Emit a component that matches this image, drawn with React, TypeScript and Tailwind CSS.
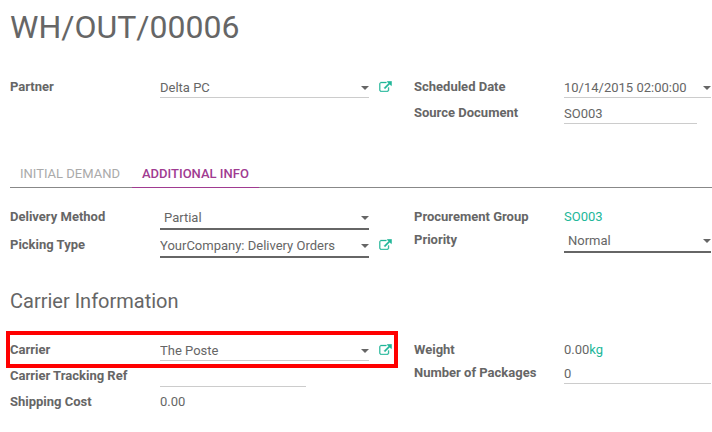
import { useState } from "react";
import type { ReactNode } from "react";
import clsx from "clsx";

interface FieldRowProps {
  id?: string;
  label: string;
  children: ReactNode;
  className?: string;
}

function FieldRow({ id, label, children, className }: FieldRowProps) {
  return (
    <div className={clsx("flex items-start", className)}>
      {id ? (
        <label htmlFor={id} className="w-[150px] shrink-0 font-bold leading-[18px]">
          {label}
        </label>
      ) : (
        <span className="w-[150px] shrink-0 font-bold leading-[18px]">{label}</span>
      )}
      {children}
    </div>
  );
}

function Caret() {
  return (
    <svg viewBox="0 0 8 4" className="pointer-events-none absolute right-0 top-2 h-1 w-2" aria-hidden="true">
      <path d="M0 0h8L4 4z" fill="currentColor" />
    </svg>
  );
}

interface TextFieldProps {
  id: string;
  defaultValue?: string;
  caret?: boolean;
  strong?: boolean;
  className?: string;
}

function TextField({ id, defaultValue = "", caret, strong, className = "min-w-0 flex-1" }: TextFieldProps) {
  return (
    <div className={clsx("relative flex", strong ? "border-b-2 border-[#666]" : "border-b border-[#ccc]", className)}>
      <input
        id={id}
        type="text"
        defaultValue={defaultValue}
        className={clsx("w-full min-w-0 bg-transparent leading-5 outline-none", strong ? "h-5" : "h-[19px]", caret && "pr-3")}
      />
      {caret && <Caret />}
    </div>
  );
}

function SelectField({ id, options }: { id: string; options: string[] }) {
  return (
    <div className="relative flex min-w-0 flex-1 border-b-2 border-[#666]">
      <select id={id} className="h-5 w-full appearance-none bg-transparent pl-1 pr-3 leading-5 outline-none">
        {options.map((option) => (
          <option key={option}>{option}</option>
        ))}
      </select>
      <Caret />
    </div>
  );
}

function OpenButton({ label }: { label: string }) {
  return (
    <button type="button" aria-label={label} className="ml-[10px] mt-[3px] w-[14px] shrink-0 text-[#21b799]">
      <svg
        viewBox="-30 -30 1852 1596"
        className="h-[11px] w-[13px]"
        fill="currentColor"
        stroke="currentColor"
        strokeWidth="50"
        aria-hidden="true"
      >
        <path d="M1408 928v320q0 119-84.5 203.5T1120 1536H288q-119 0-203.5-84.5T0 1248V416q0-119 84.5-203.5T288 128h704q14 0 23 9t9 23v64q0 14-9 23t-23 9H288q-66 0-113 47t-47 113v832q0 66 47 113t113 47h832q66 0 113-47t47-113V928q0-14 9-23t23-9h64q14 0 23 9t9 23z" />
        <path d="M1792 64v512q0 26-19 45t-45 19-45-19l-176-176-652 652q-10 10-23 10t-23-10l-114-114q-10-10-10-23t10-23l652-652-176-176q-19-19-19-45t19-45 45-19h512q26 0 45 19t19 45z" />
      </svg>
    </button>
  );
}

// Two column group used by every section of the form
function Group({ left, right, className }: { left: ReactNode; right: ReactNode; className?: string }) {
  return (
    <div className={clsx("grid grid-cols-[404fr_297fr] pr-px", className)}>
      <div className="flex min-w-0 flex-col gap-[6px] pr-[21px]">{left}</div>
      <div className="flex min-w-0 flex-col">{right}</div>
    </div>
  );
}

const tabs = [
  { id: "demand", label: "Initial Demand" },
  { id: "info", label: "Additional Info" },
];

export default function App() {
  const [activeTab, setActiveTab] = useState("info");

  return (
    <main className="bg-white pb-5 pl-[10px] pt-2 font-[Roboto,sans-serif] text-[13px] text-[#666]">
      <h1 className="text-[32px] leading-[38px]">WH/OUT/00006</h1>

      <Group
        className="mt-8"
        left={
          <FieldRow id="partner" label="Partner">
            <TextField id="partner" defaultValue="Delta PC" caret />
            <OpenButton label="Open partner" />
          </FieldRow>
        }
        right={
          <div className="flex flex-col gap-[6px]">
            <FieldRow id="date" label="Scheduled Date">
              <TextField id="date" defaultValue="10/14/2015 02:00:00" caret />
            </FieldRow>
            <FieldRow id="source" label="Source Document">
              <TextField id="source" defaultValue="SO003" className="w-[133px]" />
            </FieldRow>
          </div>
        }
      />

      <div role="tablist" className="mt-9 flex gap-[2px] border-b border-[#888]">
        {tabs.map((tab) => (
          <button
            key={tab.id}
            type="button"
            role="tab"
            aria-selected={activeTab === tab.id}
            onClick={() => setActiveTab(tab.id)}
            className={clsx(
              "-mb-px border-b px-[10px] pb-1 pt-[5px] uppercase leading-[18px]",
              activeTab === tab.id
                ? "border-[#a03b91] font-medium text-[#a03b91]"
                : "border-transparent text-[#aaa]"
            )}
          >
            {tab.label}
          </button>
        ))}
      </div>

      <Group
        className="mt-5"
        left={
          <>
            <FieldRow id="method" label="Delivery Method" className="pr-6">
              <SelectField id="method" options={["Partial", "All at once"]} />
            </FieldRow>
            <FieldRow id="picking" label="Picking Type">
              <TextField id="picking" defaultValue="YourCompany: Delivery Orders" caret strong />
              <OpenButton label="Open picking type" />
            </FieldRow>
          </>
        }
        right={
          <>
            <FieldRow label="Procurement Group" className="mb-[5px]">
              <a href="#procurement" className="leading-[18px] text-[#21b799]">
                SO003
              </a>
            </FieldRow>
            <FieldRow id="priority" label="Priority">
              <SelectField id="priority" options={["Normal", "Not urgent", "Urgent", "Very Urgent"]} />
            </FieldRow>
          </>
        }
      />

      <h2 className="mt-[31px] text-[20px] leading-6">Carrier Information</h2>

      <Group
        className="mt-7"
        left={
          <>
            <div className="relative">
              <FieldRow id="carrier" label="Carrier">
                <TextField id="carrier" defaultValue="The Poste" caret />
                <OpenButton label="Open carrier" />
              </FieldRow>
              <div className="pointer-events-none absolute -bottom-[7px] -left-1 -right-[5px] -top-[10px] border-4 border-[#f00]" />
            </div>
            <FieldRow id="tracking" label="Carrier Tracking Ref">
              <TextField id="tracking" className="w-[146px]" />
            </FieldRow>
            <FieldRow label="Shipping Cost">
              <span className="leading-[18px]">0.00</span>
            </FieldRow>
          </>
        }
        right={
          <>
            <FieldRow label="Weight" className="mb-[5px]">
              <span className="leading-[18px]">
                0.00<span className="text-[#21b799]">kg</span>
              </span>
            </FieldRow>
            <FieldRow id="packages" label="Number of Packages">
              <TextField id="packages" defaultValue="0" />
            </FieldRow>
          </>
        }
      />
    </main>
  );
}
